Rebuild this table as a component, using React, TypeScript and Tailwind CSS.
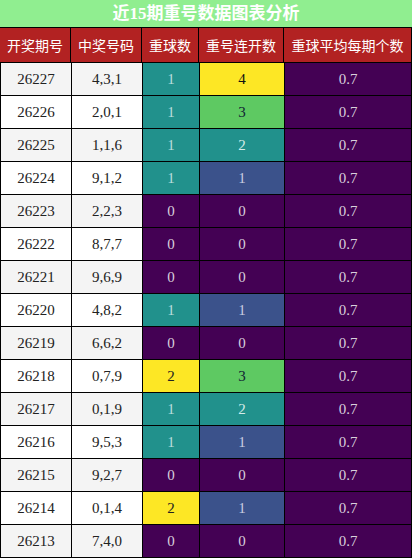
import React from 'react';

const rows: [string, string, number, number][] = [
  ['26227', '4,3,1', 1, 4],
  ['26226', '2,0,1', 1, 3],
  ['26225', '1,1,6', 1, 2],
  ['26224', '9,1,2', 1, 1],
  ['26223', '2,2,3', 0, 0],
  ['26222', '8,7,7', 0, 0],
  ['26221', '9,6,9', 0, 0],
  ['26220', '4,8,2', 1, 1],
  ['26219', '6,6,2', 0, 0],
  ['26218', '0,7,9', 2, 3],
  ['26217', '0,1,9', 1, 2],
  ['26216', '9,5,3', 1, 1],
  ['26215', '9,2,7', 0, 0],
  ['26214', '0,1,4', 2, 1],
  ['26213', '7,4,0', 0, 0],
];

// viridis-style scale, keyed by value
const ballColor: Record<number, string> = {
  0: 'bg-[#440154] text-[#d8d0dc]',
  1: 'bg-[#21918c] text-[#b9dedc]',
  2: 'bg-[#fde725] text-[#222]',
};

const streakColor: Record<number, string> = {
  0: 'bg-[#440154] text-[#d8d0dc]',
  1: 'bg-[#3b528b] text-[#c8cde0]',
  2: 'bg-[#21918c] text-[#d5ecea]',
  3: 'bg-[#5ec962] text-[#123]',
  4: 'bg-[#fde725] text-[#111]',
};

const headers = ['开奖期号', '中奖号码', '重球数', '重号连开数', '重球平均每期个数'];

const cols = 'grid grid-cols-[70px_70px_56px_84px_126px] gap-px';
const serif = "font-['Liberation_Serif','Noto_Sans_CJK_SC',serif]";

export default function App() {
  return (
    <div className="w-[412px] h-[558px] bg-black overflow-hidden">
      <div
        className={`h-[27px] bg-[#90ee90] text-white text-[17px] font-bold leading-[27px] text-center ${serif}`}
      >
        近15期重号数据图表分析
      </div>
      <div className={`${cols} mt-px`}>
        {headers.map((h, i) => (
          <div
            key={h}
            className={`h-[34px] bg-[#b22222] text-white text-[14px] flex items-center justify-center font-['Noto_Sans_CJK_SC',sans-serif] ${
              i === 4 ? 'w-[127px]' : ''
            }`}
          >
            {h}
          </div>
        ))}
      </div>
      <div className={`${cols} px-px pt-px`}>
        {rows.map(([issue, nums, balls, streak], idx) => {
          const light = idx % 2 === 0 ? 'bg-[#f4f4f4]' : 'bg-white';
          return (
            <React.Fragment key={issue}>
              <div className={`h-[32px] flex items-center justify-center text-[15px] text-[#222] ${serif} ${light}`}>
                {issue}
              </div>
              <div className={`h-[32px] flex items-center justify-center text-[15px] text-[#222] ${serif} ${light}`}>
                {nums}
              </div>
              <div className={`h-[32px] flex items-center justify-center text-[15px] ${serif} ${ballColor[balls]}`}>
                {balls}
              </div>
              <div className={`h-[32px] flex items-center justify-center text-[15px] ${serif} ${streakColor[streak]}`}>
                {streak}
              </div>
              <div className={`h-[32px] flex items-center justify-center text-[15px] ${serif} bg-[#440154] text-[#d8d0dc]`}>
                0.7
              </div>
            </React.Fragment>
          );
        })}
      </div>
    </div>
  );
}
